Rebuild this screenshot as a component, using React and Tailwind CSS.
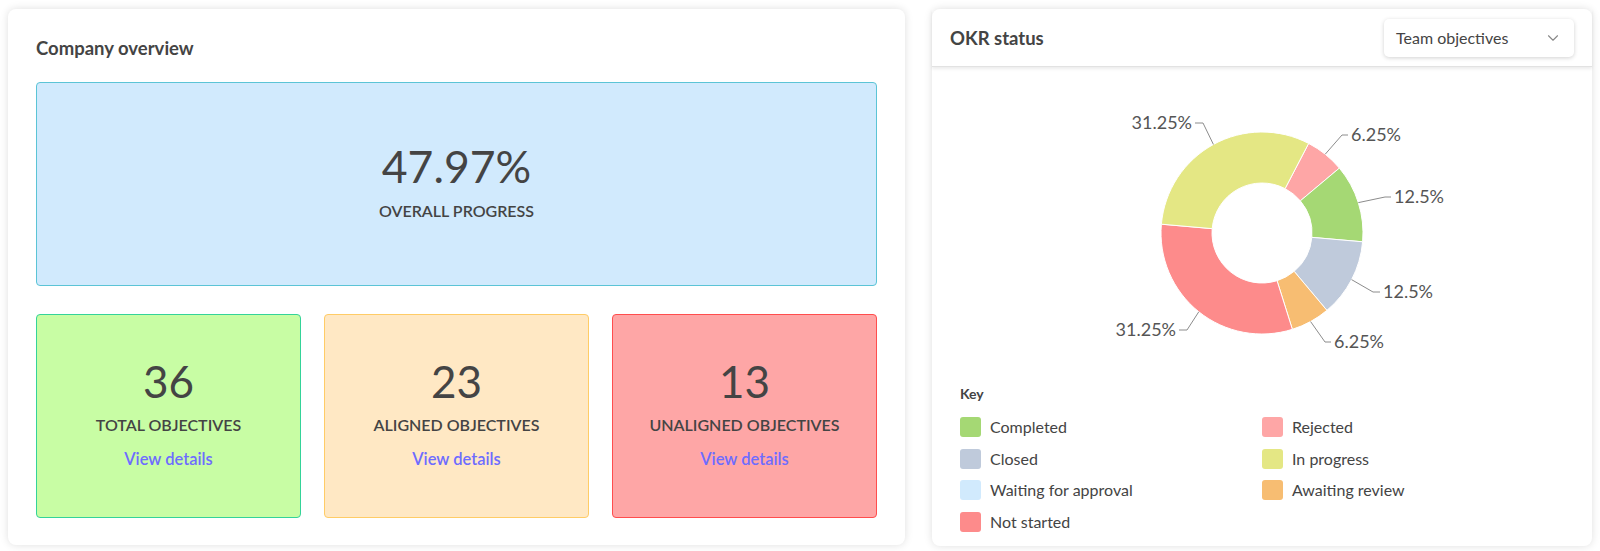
import React from "react";
import { ChevronDown } from "lucide-react";

const SLICES = [
  { key: "Rejected", pct: 6.25, color: "#fea6a6" },
  { key: "Completed", pct: 12.5, color: "#a5d874" },
  { key: "Closed", pct: 12.5, color: "#bfcadb" },
  { key: "Awaiting review", pct: 6.25, color: "#f7bd72" },
  { key: "Not started", pct: 31.25, color: "#fd8b8b" },
  { key: "In progress", pct: 31.25, color: "#e4e784" },
];

// label end points (elbow, text anchor point) per slice, same order as SLICES
const LABELS = [
  { elbow: [382, 58], end: [388, 58], anchor: "start", text: "6.25%" },
  { elbow: [425, 120], end: [431, 120], anchor: "start", text: "12.5%" },
  { elbow: [413, 215], end: [420, 215], anchor: "start", text: "12.5%" },
  { elbow: [365, 265], end: [371, 265], anchor: "start", text: "6.25%" },
  { elbow: [227, 253], end: [219, 253], anchor: "end", text: "31.25%" },
  { elbow: [243, 46], end: [235, 46], anchor: "end", text: "31.25%" },
];

const LEGEND = [
  { label: "Completed", color: "#a5d874" },
  { label: "Rejected", color: "#fea6a6" },
  { label: "Closed", color: "#bfcadb" },
  { label: "In progress", color: "#e4e784" },
  { label: "Waiting for approval", color: "#d1eafd" },
  { label: "Awaiting review", color: "#f7bd72" },
  { label: "Not started", color: "#fd8b8b" },
];

const CX = 302;
const CY = 156;
const R = 101;
const RI = 50;

function pt(r, deg) {
  const a = (deg * Math.PI) / 180;
  return [CX + r * Math.sin(a), CY - r * Math.cos(a)];
}

function slicePath(a0, a1) {
  const [x0, y0] = pt(R, a0);
  const [x1, y1] = pt(R, a1);
  const [x2, y2] = pt(RI, a1);
  const [x3, y3] = pt(RI, a0);
  const large = a1 - a0 > 180 ? 1 : 0;
  return `M${x0} ${y0} A${R} ${R} 0 ${large} 1 ${x1} ${y1} L${x2} ${y2} A${RI} ${RI} 0 ${large} 0 ${x3} ${y3} Z`;
}

function Donut() {
  let start = 27.5;
  const parts = SLICES.map((s, i) => {
    const sweep = (s.pct / 100) * 360;
    const a0 = start;
    const a1 = start + sweep;
    start = a1;
    return { ...s, a0, a1, mid: (a0 + a1) / 2, label: LABELS[i] };
  });

  return (
    <svg width="604" height="290" viewBox="0 0 604 290" className="block">
      {parts.map((p) => (
        <path key={p.key} d={slicePath(p.a0, p.a1)} fill={p.color} stroke="#fff" strokeWidth="1" />
      ))}
      {parts.map((p) => {
        const [sx, sy] = pt(R, p.mid);
        const { elbow, end, anchor, text } = p.label;
        const tx = anchor === "start" ? end[0] + 3 : end[0] - 3;
        return (
          <g key={p.key + "-l"}>
            <path
              d={`M${sx} ${sy} L${elbow[0]} ${elbow[1]} L${end[0]} ${end[1]}`}
              fill="none"
              stroke="#8c8c8c"
              strokeWidth="1"
            />
            <text
              x={tx}
              y={end[1] + 6}
              textAnchor={anchor}
              fill="#555"
              fontSize="18"
              fontFamily="Lato, sans-serif"
            >
              {text}
            </text>
          </g>
        );
      })}
    </svg>
  );
}

function StatBox({ value, label, className }) {
  return (
    <div className={`flex h-[204px] flex-col items-center justify-center rounded-[4px] border pb-[8px] ${className}`}>
      <div className="text-[44px] leading-[52px] text-[#444]">{value}</div>
      <div className="mt-[8px] text-[16px] font-semibold leading-[20px] text-[#444]">{label}</div>
      <a href="#" className="mt-[14px] text-[16.5px] font-semibold leading-[20px] text-[#6e6cff]">
        View details
      </a>
    </div>
  );
}

export default function App() {
  return (
    <div className="flex h-[551px] gap-[27px] bg-white px-2 pt-[9px] font-[Lato,sans-serif] text-[#444]">
      <div className="h-[536px] w-[897px] rounded-[8px] bg-white p-7 shadow-[0_0_8px_rgba(0,0,0,0.13)]">
        <h2 className="text-[18.5px] font-bold leading-[22px] text-[#444]">Company overview</h2>
        <div className="mt-[23px] flex h-[204px] flex-col items-center justify-center rounded-[4px] border border-[#5bc4d6] bg-[#d1eafd] pb-[7px]">
          <div className="text-[44.5px] leading-[52px] text-[#444]">47.97%</div>
          <div className="mt-[9px] text-[16px] font-semibold leading-[20px]">OVERALL PROGRESS</div>
        </div>
        <div className="mt-[28px] grid grid-cols-3 gap-[23px]">
          <StatBox value="36" label="TOTAL OBJECTIVES" className="border-[#34d399] bg-[#c8fda4]" />
          <StatBox value="23" label="ALIGNED OBJECTIVES" className="border-[#ffcc66] bg-[#ffe8c4]" />
          <StatBox value="13" label="UNALIGNED OBJECTIVES" className="border-[#ff4d4d] bg-[#fea6a6]" />
        </div>
      </div>

      <div className="flex h-[537px] w-[660px] flex-col rounded-[8px] bg-white shadow-[0_0_8px_rgba(0,0,0,0.13)]">
        <div className="flex h-[58px] items-center justify-between border-b border-[#e2e2e2] px-[18px] shadow-[0_2px_3px_rgba(0,0,0,0.08)]">
          <h2 className="text-[18.5px] font-bold leading-[22px] text-[#444]">OKR status</h2>
          <button className="flex h-[38px] w-[190px] items-center justify-between rounded-[5px] bg-white pl-[12px] pr-[12px] text-[16px] text-[#444] shadow-[0_1px_4px_rgba(0,0,0,0.18)]">
            <span>Team objectives</span>
            <ChevronDown size={18} strokeWidth={1.5} className="text-[#888]" />
          </button>
        </div>
        <div className="px-7 pt-[10px]">
          <Donut />
          <div className="mt-[17px] text-[14px] font-bold leading-[20px] text-[#444]">Key</div>
          <div className="mt-[13px] grid grid-cols-2 gap-y-[11.5px]">
            {LEGEND.map((l) => (
              <div key={l.label} className="flex h-5 items-center gap-[9px]">
                <span className="h-5 w-[21px] rounded-[3px]" style={{ backgroundColor: l.color }} />
                <span className="text-[16px] leading-5 text-[#444]">{l.label}</span>
              </div>
            ))}
          </div>
        </div>
      </div>
    </div>
  );
}
